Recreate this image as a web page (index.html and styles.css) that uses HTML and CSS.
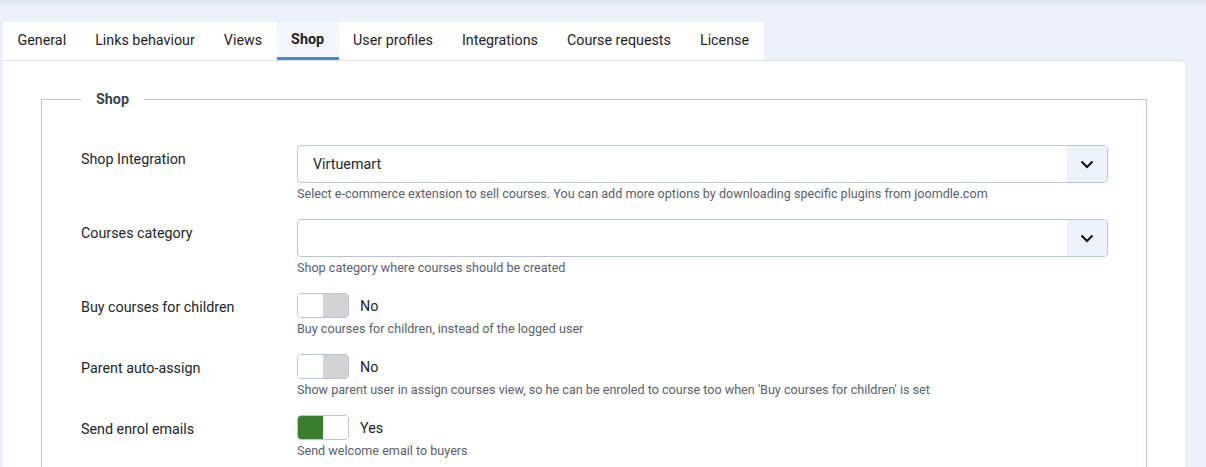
FILE: index.html
```html
<!DOCTYPE html>
<html>
<head>
<meta charset="utf-8">
<link rel="stylesheet" href="styles.css">
</head>
<body>
<div class="page">
  <nav class="tabs">
    <div class="tab">General</div>
    <div class="tab">Links behaviour</div>
    <div class="tab">Views</div>
    <div class="tab active">Shop</div>
    <div class="tab">User profiles</div>
    <div class="tab">Integrations</div>
    <div class="tab">Course requests</div>
    <div class="tab">License</div>
  </nav>
  <div class="panel">
    <fieldset class="group">
      <legend>Shop</legend>
      <div class="row">
        <div class="label">Shop Integration</div>
        <div class="control">
          <div class="select"><span class="value">Virtuemart</span><span class="caret"><svg width="14" height="9" viewBox="0 0 14 9"><path d="M1.5 1.5 L7 7 L12.5 1.5" fill="none" stroke="#111" stroke-width="2"/></svg></span></div>
          <div class="help">Select e-commerce extension to sell courses. You can add more options by downloading specific plugins from joomdle.com</div>
        </div>
      </div>
      <div class="row">
        <div class="label">Courses category</div>
        <div class="control">
          <div class="select"><span class="value"></span><span class="caret"><svg width="14" height="9" viewBox="0 0 14 9"><path d="M1.5 1.5 L7 7 L12.5 1.5" fill="none" stroke="#111" stroke-width="2"/></svg></span></div>
          <div class="help">Shop category where courses should be created</div>
        </div>
      </div>
      <div class="row">
        <div class="label">Buy courses for children</div>
        <div class="control">
          <div class="switch-line"><span class="switch off"><span class="half"></span><span class="half"></span></span><span class="state">No</span></div>
          <div class="help">Buy courses for children, instead of the logged user</div>
        </div>
      </div>
      <div class="row">
        <div class="label">Parent auto-assign</div>
        <div class="control">
          <div class="switch-line"><span class="switch off"><span class="half"></span><span class="half"></span></span><span class="state">No</span></div>
          <div class="help">Show parent user in assign courses view, so he can be enroled to course too when 'Buy courses for children' is set</div>
        </div>
      </div>
      <div class="row">
        <div class="label">Send enrol emails</div>
        <div class="control">
          <div class="switch-line"><span class="switch on"><span class="half"></span><span class="half"></span></span><span class="state">Yes</span></div>
          <div class="help">Send welcome email to buyers</div>
        </div>
      </div>
    </fieldset>
  </div>
</div>
</body>
</html>
```
FILE: styles.css
```css
html, body {
  margin: 0;
  padding: 0;
}
body {
  background: #edf0f8;
  font-family: Roboto, "Liberation Sans", sans-serif;
  color: #22262a;
  height: 467px;
  overflow: hidden;
  background-image: linear-gradient(to bottom, #dfe4ef 0px, #edf0f8 5px);
}
.page {
  padding: 22px 0 0 3px;
  width: 1182px;
}
.tabs {
  display: flex;
  width: fit-content;
  background: #fff;
}
.tab {
  box-sizing: border-box;
  height: 38px;
  line-height: 36px;
  padding: 0 14.5px;
  font-size: 14.3px;
  color: #1f2327;
}
.tab.active {
  background: #f4f6fb;
  font-weight: 700;
  border-bottom: 3px solid #5b84c4;
  line-height: 35px;
}
.panel {
  background: #fff;
  border-top: 1px solid #dce2ee;
  border-top-right-radius: 4px;
  padding: 28px 38px 40px 38px;
}
.group {
  margin: 0;
  border: 1px solid #b9c4dc;
  padding: 36px 38px 0 39px;
}
.group legend {
  padding: 0 15px;
  font-weight: 700;
  font-size: 14.3px;
  color: #3c4453;
  line-height: 20px;
}
.row {
  display: grid;
  grid-template-columns: 216px 1fr;
  margin-bottom: 16px;
}
.label {
  padding-top: 4px;
  line-height: 20px;
  font-size: 14.3px;
  color: #22262a;
}
.select {
  display: flex;
  height: 36px;
  border: 1px solid #b9c4dc;
  border-radius: 4px;
  overflow: hidden;
}
.select .value {
  flex: 1;
  padding-left: 15px;
  line-height: 36px;
  font-size: 14.3px;
  color: #22262a;
}
.select .caret {
  width: 40px;
  background: #eef2f9;
  display: flex;
  align-items: center;
  justify-content: center;
}
.help {
  margin-top: 2px;
  line-height: 18px;
  font-size: 12.6px;
  color: #5a616d;
}
.switch-line {
  display: flex;
  align-items: center;
  height: 25px;
}
.switch {
  display: flex;
  width: 50px;
  height: 23px;
  border: 1px solid #b9c4dc;
  border-radius: 4px;
  overflow: hidden;
}
.switch .half {
  flex: 1;
  background: #fff;
}
.switch.off .half:last-child {
  background: #d3d3d3;
}
.switch.on .half:first-child {
  background: #3b7d2e;
}
.state {
  margin-left: 11px;
  font-size: 14.3px;
  color: #22262a;
}
```
